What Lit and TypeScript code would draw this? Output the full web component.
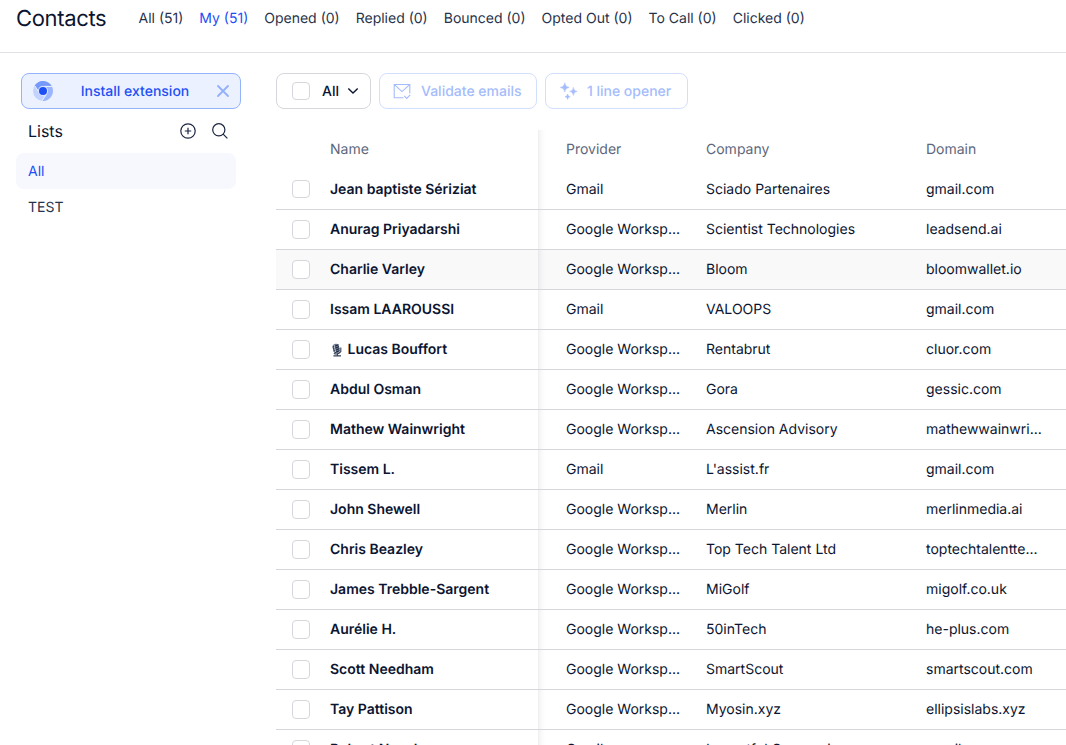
import { LitElement, html, css } from "lit";
import { customElement } from "lit/decorators.js";

const TABS = ["All (51)", "My (51)", "Opened (0)", "Replied (0)", "Bounced (0)", "Opted Out (0)", "To Call (0)", "Clicked (0)"];
const GW = "Google Worksp...";
const ROWS: string[][] = [
  ["Jean baptiste Sériziat", "Gmail", "Sciado Partenaires", "gmail.com"],
  ["Anurag Priyadarshi", GW, "Scientist Technologies", "leadsend.ai"],
  ["Charlie Varley", GW, "Bloom", "bloomwallet.io"],
  ["Issam LAAROUSSI", "Gmail", "VALOOPS", "gmail.com"],
  ["Lucas Bouffort", GW, "Rentabrut", "cluor.com"],
  ["Abdul Osman", GW, "Gora", "gessic.com"],
  ["Mathew Wainwright", GW, "Ascension Advisory", "mathewwainwri..."],
  ["Tissem L.", "Gmail", "L'assist.fr", "gmail.com"],
  ["John Shewell", GW, "Merlin", "merlinmedia.ai"],
  ["Chris Beazley", GW, "Top Tech Talent Ltd", "toptechtalentte..."],
  ["James Trebble-Sargent", GW, "MiGolf", "migolf.co.uk"],
  ["Aurélie H.", GW, "50inTech", "he-plus.com"],
  ["Scott Needham", GW, "SmartScout", "smartscout.com"],
  ["Tay Pattison", GW, "Myosin.xyz", "ellipsislabs.xyz"],
  ["Robert Novak", "Gmail", "Impactful Companies", "gmail.com"],
];

const mic = html`<svg width="14" height="14" viewBox="0 0 14 14">
  <g transform="rotate(-12 7 7)">
    <rect x="3.2" y="0.6" width="6.6" height="9.4" rx="3" fill="#66728a" />
    <path d="M3.4 3.2l6.2-1M3.4 5.2l6.2-1M3.4 7.2l6.2-1M4.2 9l5-.8" stroke="#182238" stroke-width=".9" />
    <path d="M5.2 1.3v7.4" stroke="#c5ccda" stroke-width=".8" />
  </g>
  <path d="M3.8 10.5q4.2 1.6 7-1.8V4.5M7.4 11v1.4M3.4 12.9h7.6" fill="none" stroke="#344058" stroke-width="1.1" />
</svg>`;

@customElement("app-root")
export class AppRoot extends LitElement {
  static styles = css`
    :host { display: block; height: 745px; overflow: hidden; background: #fff; color: #0b1430; font: 14px/20px Inter, sans-serif; letter-spacing: 0; text-rendering: geometricPrecision; }
    * { box-sizing: border-box; }
    svg { display: block; flex: none; }
    .top { display: flex; height: 53px; padding-left: 16px; border-bottom: 1px solid #e0e1e8; }
    .title { width: 122.5px; font-size: 22px; line-height: 38px; letter-spacing: -0.35px; }
    .tabs { display: flex; gap: 16px; line-height: 38px; color: #27324b; white-space: nowrap; }
    .active { color: #1d4ff5; }
    .main { display: flex; }
    .side { width: 276px; flex: none; padding: 20px 0 0 16px; }
    .install { display: flex; align-items: center; width: 220px; height: 36px; margin-left: 5px; padding: 0 10px 0 11px; border: 1px solid #93b4fb; border-radius: 8px; background: #ebf1ff; color: #1d4ff5; font-weight: 500; }
    .install .label { flex: 1; text-align: center; padding: 1px 0 0 1px; }
    .lists { display: flex; align-items: center; height: 44px; width: 220px; padding: 0 8px 0 12px; gap: 16px; font-size: 16px; letter-spacing: 0; }
    .lists span { flex: 1; }
    .item { height: 36px; width: 220px; padding: 0 12px; line-height: 37px; border-radius: 8px; color: #27324b; }
    .item.active { background: #f7f8fe; color: #1d4ff5; }
    .content { flex: 1; min-width: 0; padding-top: 20px; }
    .tools { display: flex; gap: 8px; }
    .btn { display: flex; align-items: center; height: 36px; border: 1px solid #d3dfff; border-radius: 8px; color: #a5bcfc; font-weight: 500; white-space: nowrap; }
    .btn span { padding-top: 1px; }
    .btn.all { width: 95px; padding-left: 15px; border-color: #d5d7dd; color: #0b1430; }
    .btn.all span { margin: 0 8px 0 12px; }
    .btn.validate { width: 158.4px; padding-left: 12px; gap: 9px; }
    .btn.opener { width: 142.6px; padding-left: 12.5px; gap: 9px; }
    .box { display: block; width: 18px; height: 18px; border: 1px solid #d5d7dd; border-radius: 4px; background: #fff; }
    .row .box { height: 19px; }
    .row.first .box { height: 18px; margin-bottom: 1px; }
    .table { display: grid; grid-template-columns: 262px 1fr; padding-top: 21px; }
    .names { min-width: 0; }
    .rest { min-width: 0; background: linear-gradient(90deg, #ededf0, #f7f7f8 2px, rgba(255, 255, 255, 0) 7px); }
    .row { display: grid; align-items: center; height: 40px; border-bottom: 1px solid #d4d6da; }
    .row span { padding-top: 1px; white-space: nowrap; }
    .names .row { grid-template-columns: 38px 1fr; padding-left: 16px; font-weight: 600; }
    .rest .row { grid-template-columns: 140px 220px 140px; padding-left: 28px; }
    .names .row.head, .row.head { border-color: transparent; color: #5d667b; font-weight: 400; }
    .row.hover { background: rgba(20, 20, 40, 0.022); }
    .row .name { display: flex; align-items: center; gap: 3.5px; }
  `;

  private rowClass(i: number) {
    return i === 0 ? "row first" : i === 2 ? "row hover" : "row";
  }

  render() {
    return html`
      <div class="top">
        <div class="title">Contacts</div>
        <div class="tabs">${TABS.map((t, i) => html`<span class=${i === 1 ? "active" : ""}>${t}</span>`)}</div>
      </div>
      <div class="main">
        <div class="side">
          <div class="install">
            <svg width="20" height="20" viewBox="0 0 20 20">
              <circle cx="10" cy="10" r="10" fill="#c3d3ff" />
              <path d="M1.6 4.6A10 10 0 0 1 18.7 5H10A5 5 0 0 0 5.2 9.2Z" fill="#7699fa" />
              <path d="M19 5.8A10 10 0 0 1 9.4 20L14.2 12.6A5 5 0 0 0 13 5.8Z" fill="#9cb6fd" />
              <path d="M9.1 19.5L13.2 13.7M1.8 4.8L5.6 10.6M10.5 5.4H18.6" stroke="#ebf1ff" stroke-width="1" />
              <circle cx="10" cy="10" r="4.9" fill="#dbe5ff" />
              <circle cx="10" cy="10" r="4" fill="#1d4ff5" />
            </svg>
            <span class="label">Install extension</span>
            <svg width="14" height="14" viewBox="0 0 14 14"><path d="M2 2l10 10M12 2L2 12" stroke="#93b0fb" stroke-width="1.8" stroke-linecap="round" /></svg>
          </div>
          <div class="lists">
            <span>Lists</span>
            <svg width="16" height="16" viewBox="0 0 16 16" fill="none" stroke="#1b2540" stroke-width="1.2"><circle cx="8" cy="8" r="7.2" /><path d="M8 4.8v6.4M4.8 8h6.4" /></svg>
            <svg width="16" height="16" viewBox="0 0 16 16" fill="none" stroke="#1b2540" stroke-width="1.2"><circle cx="6.8" cy="6.8" r="6.1" /><path d="M11.1 11.1l4.3 4.3" /></svg>
          </div>
          <div class="item active">All</div>
          <div class="item">TEST</div>
        </div>
        <div class="content">
          <div class="tools">
            <div class="btn all"><i class="box"></i><span>All</span>
              <svg width="12" height="8" viewBox="0 0 12 8"><path d="M1.3 1.6L6 6l4.7-4.4" fill="none" stroke="#0b1430" stroke-width="1.4" /></svg>
            </div>
            <div class="btn validate">
              <svg width="20" height="18" viewBox="0 0 20 18" fill="none" stroke="#a5bcfc" stroke-width="1.1"><path d="M11.5 15.8H2.2V2.5H17.8V11.5M2.4 2.7L10 9.6L17.6 2.7M12.2 13.9L14.7 16.4L18.2 12.8" /></svg>
              <span>Validate emails</span>
            </div>
            <div class="btn opener">
              <svg width="19" height="18" viewBox="0 0 19 18" fill="#a5bcfc"><path d="M5.8 .8Q6.2 5 10.2 5.4Q6.2 5.8 5.8 10Q5.4 5.8 1.2 5.4Q5.4 5 5.8 .8ZM14.4 5.4Q14.7 9.1 18.2 9.4Q14.7 9.7 14.4 13.4Q14.1 9.7 10.6 9.4Q14.1 9.1 14.4 5.4ZM8.6 12Q8.9 14.5 11.2 14.7Q8.9 14.9 8.6 17.4Q8.3 14.9 6 14.7Q8.3 14.5 8.6 12Z" stroke="#a5bcfc" stroke-width=".5" /></svg>
              <span>1 line opener</span>
            </div>
          </div>
          <div class="table">
            <div class="names">
              <div class="row head"><i></i><span>Name</span></div>
              ${ROWS.map((r, i) => html`<div class=${this.rowClass(i)}><i class="box"></i><span class="name">${i === 4 ? mic : ""}${r[0]}</span></div>`)}
            </div>
            <div class="rest">
              <div class="row head"><span>Provider</span><span>Company</span><span>Domain</span></div>
              ${ROWS.map((r, i) => html`<div class=${this.rowClass(i)}>${r.slice(1).map((c) => html`<span>${c}</span>`)}</div>`)}
            </div>
          </div>
        </div>
      </div>
    `;
  }
}
